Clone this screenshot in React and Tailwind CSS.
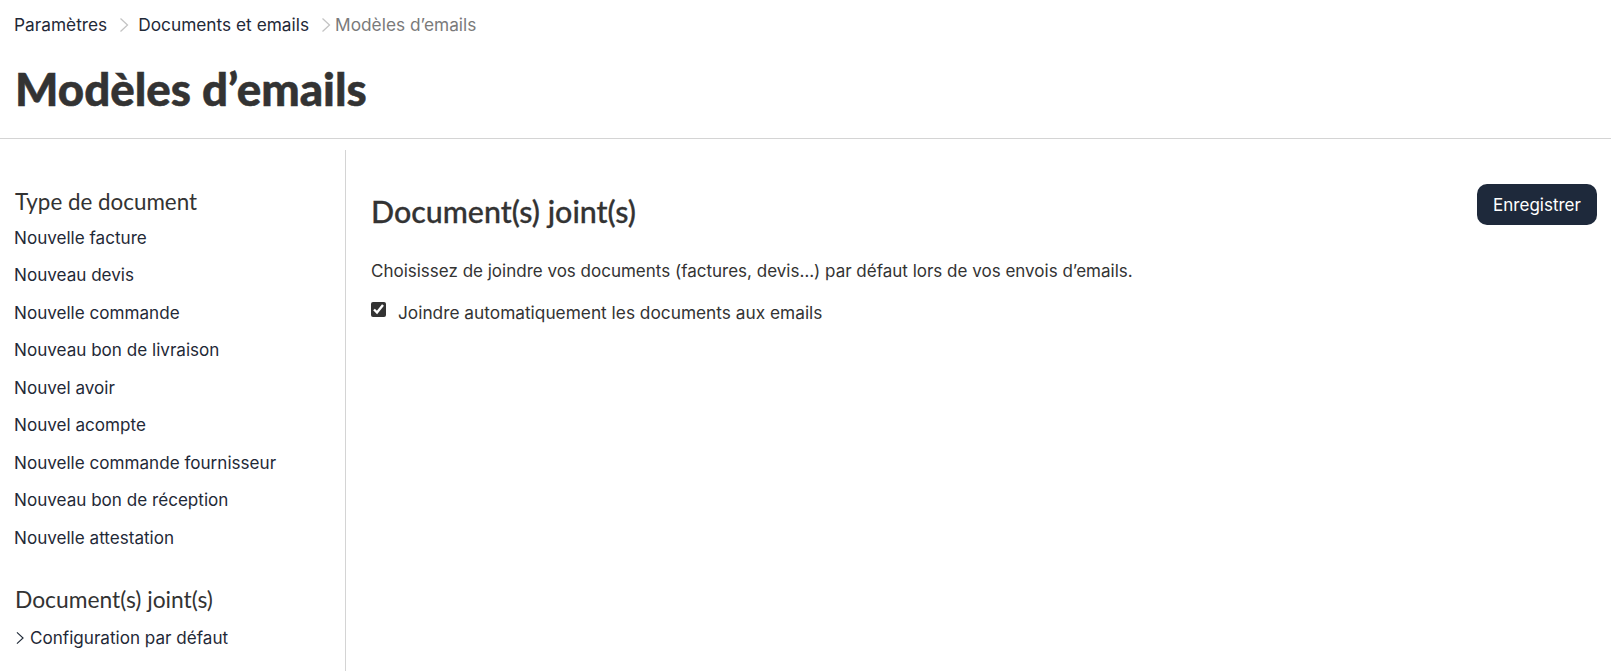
import React from "react";

const items = ["Nouvelle facture","Nouveau devis","Nouvelle commande","Nouveau bon de livraison","Nouvel avoir","Nouvel acompte","Nouvelle commande fournisseur","Nouveau bon de réception","Nouvelle attestation"];
const body = "font-['Inter','Liberation_Sans',sans-serif]";
const head = "font-['Lato','Liberation_Sans',sans-serif]";

function Chev({ className }) {
  return (
    <svg viewBox="0 0 10 16" fill="none" stroke="currentColor" strokeWidth="1.3" className={className}>
      <path d="M1.5 1.5 L8.5 8 L1.5 14.5" />
    </svg>
  );
}

export default function App() {
  return (
    <div className={`${body} h-[671px] overflow-hidden bg-white text-[#1f2937]`}>
      <header className="h-[139px] border-b border-[#d4d4d4] pl-[14px] pr-[15px] pt-[15px]">
        <nav className="flex h-5 items-center text-[17.3px] leading-5">
          <span>Paramètres</span>
          <Chev className="ml-[12px] mr-[9px] h-4 w-[10px] text-[#c4c4c4]" />
          <span>Documents et emails</span>
          <Chev className="ml-[12px] mr-[4px] h-4 w-[10px] text-[#c4c4c4]" />
          <span className="text-[#7a7a7a]">Modèles d’emails</span>
        </nav>
        <h1 className={`${head} ml-px mt-[26px] text-[45.7px] font-black leading-[56px] text-[#333333] [-webkit-text-stroke:0.5px_#333333]`}>Modèles d’emails</h1>
      </header>
      <div className="mt-[11px] flex h-[521px]">
        <aside className="w-[346px] shrink-0 border-r border-[#d4d4d4] pl-[14px] pr-[15px] pt-[38px]">
          <h2 className={`${head} ml-px text-[22.4px] leading-[28px] text-[#333333]`}>Type de document</h2>
          <ul className="mt-[3px] text-[17.1px]">
            {items.map((t) => (
              <li key={t} className="flex h-[37.5px] items-center">{t}</li>
            ))}
          </ul>
          <h2 className={`${head} ml-px mt-[28px] text-[22.8px] leading-[28px] text-[#333333]`}>Document(s) joint(s)</h2>
          <div className="mt-[7px] flex h-[37px] items-center text-[17.1px]">
            <Chev className="ml-px mr-[5px] h-[14px] w-[10px] text-[#1f2937]" />
            <span>Configuration par défaut</span>
          </div>
        </aside>
        <main className="flex-1 pl-[25px] pr-[14px]">
          <div className="flex h-[75px] items-start justify-between pt-[34px]">
            <h2 className={`${head} mt-[10px] text-[30.4px] font-medium leading-[34px] text-[#333333] [-webkit-text-stroke:0.3px_#333333]`}>Document(s) joint(s)</h2>
            <button className="h-[41px] w-[120px] rounded-[10px] bg-[#1e293b] pt-[3px] text-[17px] text-white">Enregistrer</button>
          </div>
          <p className="mt-[34px] text-[17px] leading-6 text-[#333333]">Choisissez de joindre vos documents (factures, devis…) par défaut lors de vos envois d’emails.</p>
          <label className="mt-[18px] flex h-6 items-center text-[17.3px] text-[#333333]">
            <input type="checkbox" defaultChecked className="m-0 mb-[8px] mr-[12px] h-[15px] w-[15px] accent-[#333333]" />
            Joindre automatiquement les documents aux emails
          </label>
        </main>
      </div>
    </div>
  );
}
